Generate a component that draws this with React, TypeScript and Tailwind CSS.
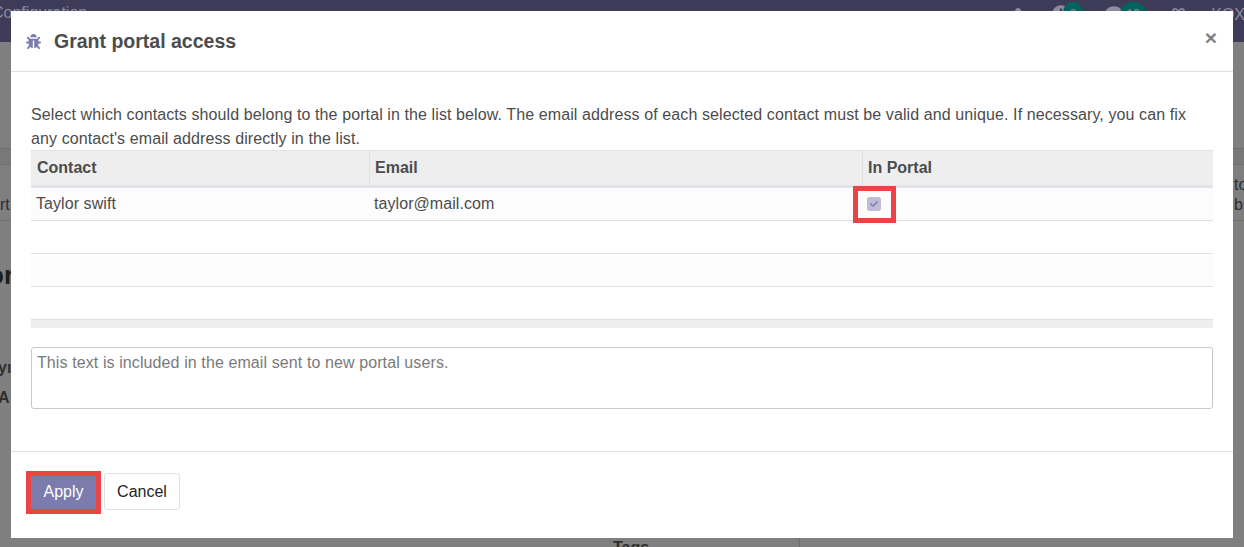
import { FaBug, FaCheck, FaClock, FaComment, FaGift } from "react-icons/fa";

const rows = [
  { name: "Taylor swift", email: "taylor@mail.com", checked: true, striped: true },
  { name: "", email: "", checked: false, striped: false },
  { name: "", email: "", checked: false, striped: true },
  { name: "", email: "", checked: false, striped: false },
];

const App = () => {
  return (
    <div className="relative h-[547px] w-[1244px] overflow-hidden bg-[#7f7f7f] font-['Liberation_Sans',Arial,sans-serif] text-[16px] text-[#4c4c4c]">
      {/* page behind the dialog */}
      <div className="flex h-[42px] items-start justify-between bg-[#3e3b58] text-[#8d8b9c]">
        <span className="ml-[-8px] mt-[3px] leading-5">Configuration</span>
        <div className="mr-[-1px] flex items-center">
          <FaBug className="mr-[27px] mt-[3px] text-[14px]" />
          <div className="mr-[22px] flex items-center">
            <FaClock className="text-[18px]" />
            <span className="ml-[-7px] flex h-[24px] w-[20px] items-center justify-center rounded-full bg-[#04635c] text-[12px]">2</span>
          </div>
          <div className="mr-[24px] flex items-center">
            <FaComment className="text-[18px]" />
            <span className="ml-[-3px] flex h-[24px] w-[26px] items-center justify-center rounded-full bg-[#04635c] text-[12px]">10</span>
          </div>
          <FaGift className="mr-[24px] mt-[3px] text-[17px]" />
          <span className="mt-[3px]">KOX</span>
        </div>
      </div>
      <div className="flex h-[505px] flex-col text-[#2e2e2e]">
        <div className="mt-[106px] h-[16px] border-t border-[#6f6f6f] bg-[#787878]" />
        <div className="flex h-[57px] items-end justify-between border-y border-[#6f6f6f] pb-[5px] text-[16px] leading-5">
          <span className="ml-[0px]">rt</span>
          <span className="mr-[-7px]">to<br />bs</span>
        </div>
        <span className="ml-[-12px] mt-[38px] text-[26px] font-bold leading-8 text-[#1e1e1e]">or</span>
        <span className="ml-[-2px] mt-[67px] font-bold leading-5">yı</span>
        <span className="ml-[-2px] mt-[10px] font-bold leading-5">A</span>
        <div className="mt-auto ml-[613px] flex h-[10px] items-start">
          <span className="w-[186px] pt-[3px] font-bold leading-4">Tags</span>
          <span className="h-full border-l border-[#6c6c6c]" />
        </div>
      </div>

      {/* dialog */}
      <div className="absolute left-[11px] top-[11px] flex h-[527px] w-[1222px] flex-col bg-white">
        <header className="flex h-[61px] items-center justify-between border-b border-[#dee2e6] pl-[15px] pr-[16px]">
          <div className="flex items-center">
            <FaBug className="text-[15px] text-[#7c7bad]" />
            <h4 className="ml-[13px] text-[19.5px] font-bold leading-6 text-[#4c4c4c]">Grant portal access</h4>
          </div>
          <button className="mb-[7px] text-[21px] font-bold leading-none text-[#7f7f7f]">×</button>
        </header>

        <div className="flex-1 px-[20px]">
          <p className="mt-[31px] text-[16px] leading-6 tracking-[0.1px] text-[#4c4c4c]">
            Select which contacts should belong to the portal in the list below. The email address of each selected contact must be valid and unique. If necessary, you can fix any contact's email address directly in the list.
          </p>
          <div className="mt-[-1px]">
            <div className="grid h-[38px] grid-cols-[338px_493px_351px] border-t border-b-[3px] border-t-[#e2e2e2] border-b-[#e0e3e8] bg-[#eeeeee] font-bold">
              <div className="flex items-center pl-[6px]">Contact</div>
              <div className="flex items-center border-l border-[#dee2e6] pl-[5px]">Email</div>
              <div className="flex items-center border-l border-[#dee2e6] pl-[5px]">In Portal</div>
            </div>
            {rows.map((row, i) => (
              <div
                key={i}
                className={`grid h-[33px] grid-cols-[338px_493px_351px] border-b border-[#dee2e6] tracking-[0.07px] ${row.striped ? "bg-[#fcfcfc]" : "bg-white"}`}
              >
                <div className="flex items-center pl-[5px]">{row.name}</div>
                <div className="flex items-center pl-[5px]">{row.email}</div>
                <div className="relative flex items-center pl-[5px]">
                  {row.checked && (
                    <>
                      <span className="flex h-[14px] w-[14px] items-center justify-center rounded-[3px] bg-[#bdbcd9]">
                        <FaCheck className="text-[8px] text-[#7c7bad]" />
                      </span>
                      <span className="absolute left-[-9px] top-[-2px] h-[37px] w-[43px] border-[5px] border-[#ea4544]" />
                    </>
                  )}
                </div>
              </div>
            ))}
            <div className="h-[8px] bg-[#eeeeee]" />
          </div>
          <textarea
            readOnly
            className="mt-[19px] block h-[62px] w-full resize-none rounded-[3px] border border-[#c9c9c9] bg-white px-[5px] py-[3px] text-[16px] leading-6 tracking-[0.1px] text-[#7a7a7a] outline-none"
            value="This text is included in the email sent to new portal users."
          />
        </div>

        <footer className="flex h-[87px] items-start gap-[4px] border-t border-[#dee2e6] pl-[20px] pt-[21px]">
          <button className="mt-[3px] h-[33px] w-[65px] bg-[#7c7bad] pb-[2px] text-[16px] text-white outline-[5px] outline-[#ea4544]">
            Apply
          </button>
          <button className="ml-[4px] h-[37px] w-[76px] rounded-[3px] border border-[#dee2e6] bg-white text-[16px] text-[#212529]">
            Cancel
          </button>
        </footer>
      </div>
    </div>
  );
};

export default App;
